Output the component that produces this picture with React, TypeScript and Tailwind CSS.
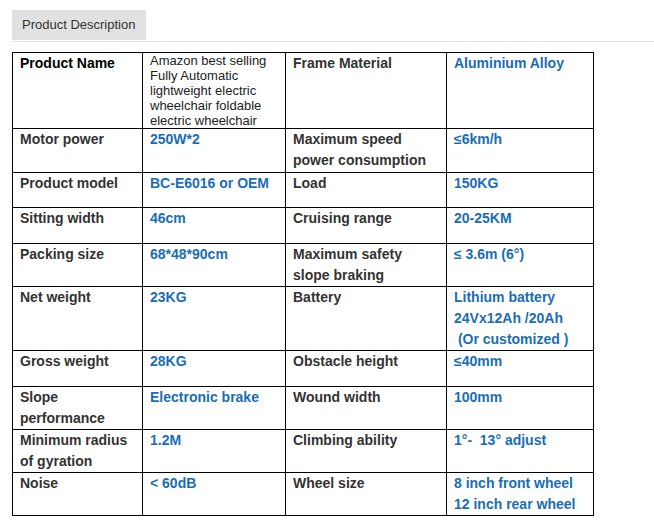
import React from "react";

type Row = {
  h: string;
  label: React.ReactNode;
  value: React.ReactNode;
  label2: React.ReactNode;
  value2: React.ReactNode;
};

const rows: Row[] = [
  {
    h: "h-[76px]",
    label: <span className="text-black">Product Name</span>,
    value: (
      <div className="text-[13px] leading-[15px] font-normal text-[#222]">
        Amazon best selling Fully Automatic lightweight electric wheelchair foldable electric wheelchair
      </div>
    ),
    label2: "Frame Material",
    value2: "Aluminium Alloy",
  },
  {
    h: "h-[44px]",
    label: "Motor power",
    value: "250W*2",
    label2: (
      <>
        Maximum speed
        <br />
        power consumption
      </>
    ),
    value2: "≤6km/h",
  },
  { h: "h-[35px]", label: "Product model", value: "BC-E6016 or OEM", label2: "Load", value2: "150KG" },
  { h: "h-[36px]", label: "Sitting width", value: "46cm", label2: "Cruising range", value2: "20-25KM" },
  {
    h: "h-[43px]",
    label: "Packing size",
    value: "68*48*90cm",
    label2: (
      <>
        Maximum safety
        <br />
        slope braking
      </>
    ),
    value2: "≤ 3.6m (6°)",
  },
  {
    h: "h-[64px]",
    label: "Net weight",
    value: "23KG",
    label2: "Battery",
    value2: (
      <>
        Lithium battery
        <br />
        24Vx12Ah /20Ah
        <br />
        {"\u00a0(Or customized )"}
      </>
    ),
  },
  { h: "h-[36px]", label: "Gross weight", value: "28KG", label2: "Obstacle height", value2: "≤40mm" },
  {
    h: "h-[43px]",
    label: (
      <>
        Slope
        <br />
        performance
      </>
    ),
    value: "Electronic brake",
    label2: "Wound width",
    value2: "100mm",
  },
  {
    h: "h-[43px]",
    label: (
      <>
        Minimum radius
        <br />
        of gyration
      </>
    ),
    value: "1.2M",
    label2: "Climbing ability",
    value2: "1°-\u00a0 13° adjust",
  },
  {
    h: "h-[43px]",
    label: "Noise",
    value: "< 60dB",
    label2: "Wheel size",
    value2: (
      <>
        8 inch front wheel
        <br />
        12 inch rear wheel
      </>
    ),
  },
];

const cell = "border border-black align-top px-[7px] pt-0 pb-0 text-left";

export default function App() {
  return (
    <div className="w-[654px] h-[523px] bg-white font-['Liberation_Sans',Arial,sans-serif] overflow-hidden">
      {/* Tab header */}
      <div className="pt-[10px] pl-[12px]">
        <div className="flex">
          <div className="h-[30px] w-[134px] bg-[#e1e1e1] text-[13px] text-[#333] flex items-center pl-[10px]">
            Product Description
          </div>
        </div>
        <div className="h-px bg-[#e3e3e3] mt-px" />
      </div>

      {/* Spec table */}
      <table className="ml-[12px] mt-[10px] w-[581px] table-fixed border-collapse text-[14px] leading-[21px] font-bold">
        <colgroup>
          <col className="w-[130px]" />
          <col className="w-[143px]" />
          <col className="w-[161px]" />
          <col className="w-[147px]" />
        </colgroup>
        <tbody>
          {rows.map((r, i) => (
            <tr key={i} className={r.h}>
              <td className={`${cell} text-[#333]`}>{r.label}</td>
              <td className={`${cell} text-[#1a6db5]`}>{r.value}</td>
              <td className={`${cell} text-[#333]`}>{r.label2}</td>
              <td className={`${cell} text-[#1a6db5]`}>{r.value2}</td>
            </tr>
          ))}
        </tbody>
      </table>
    </div>
  );
}
